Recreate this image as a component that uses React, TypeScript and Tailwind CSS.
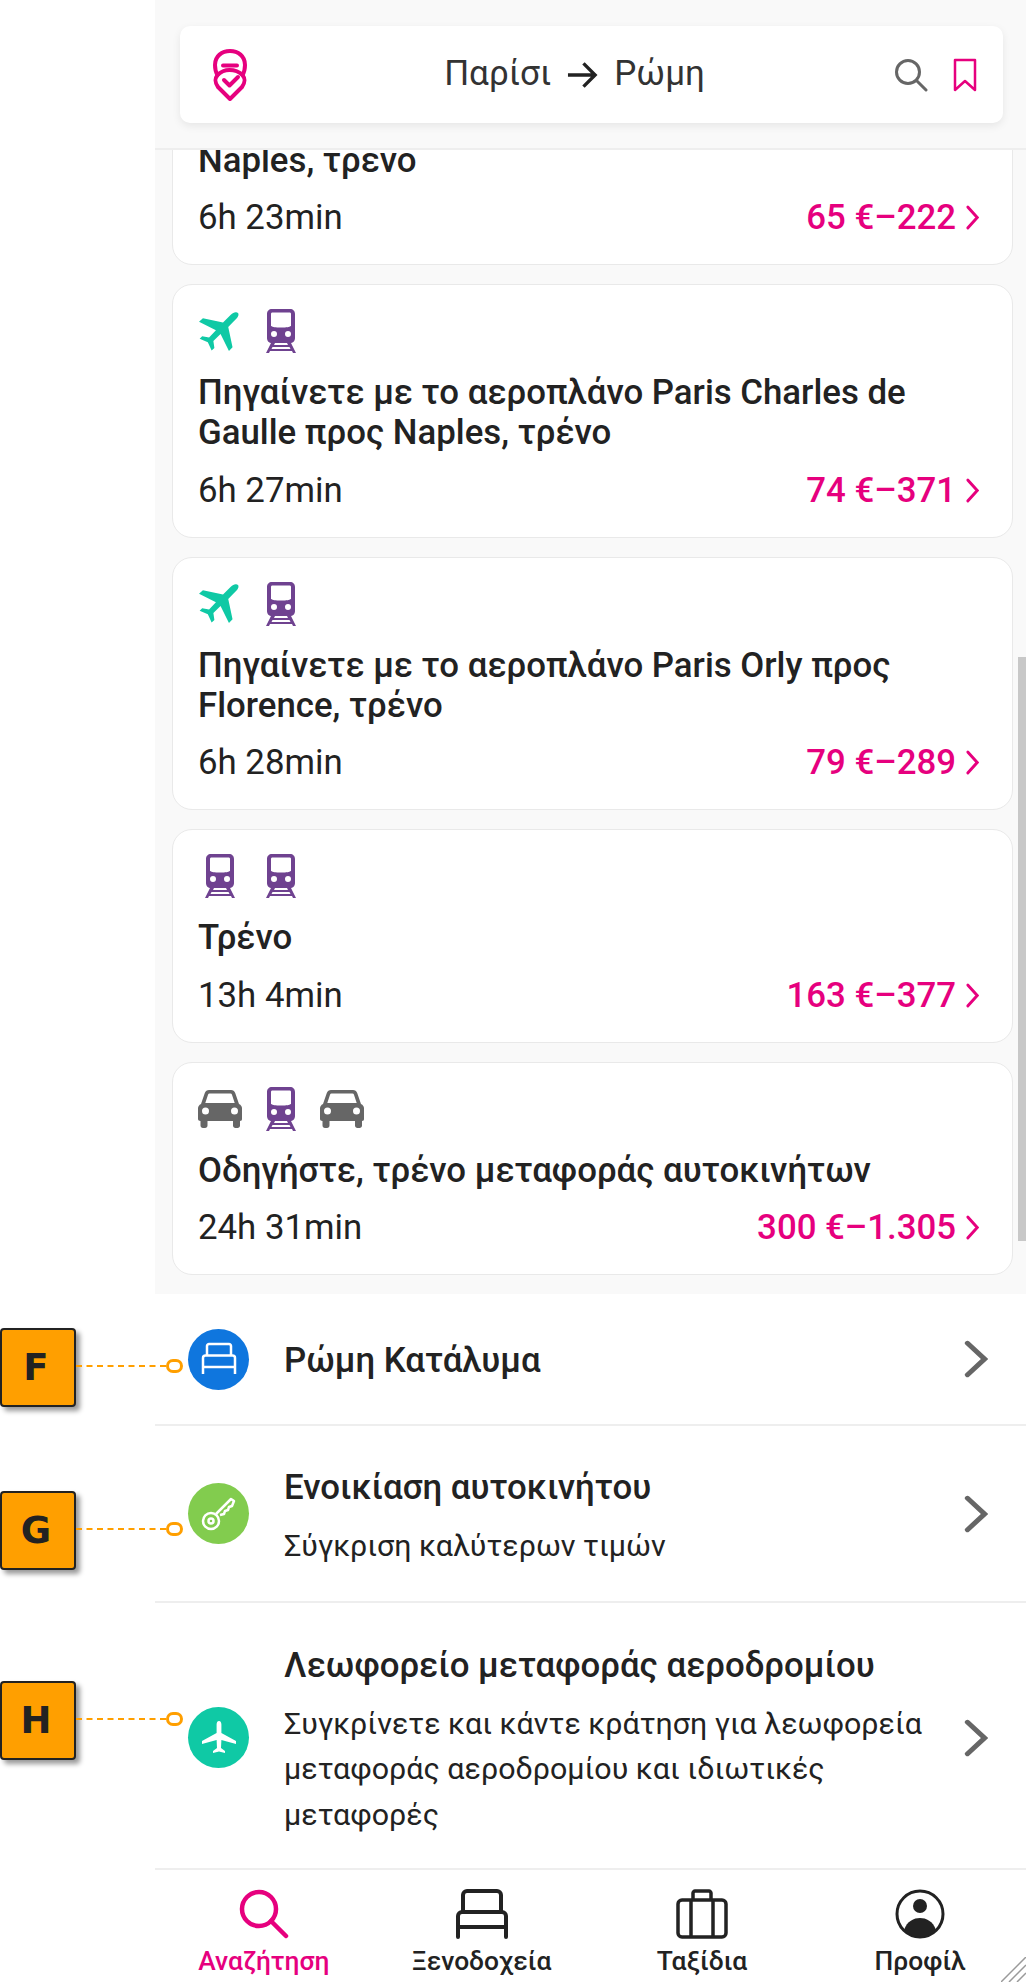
import type { ReactNode } from 'react'

const FONT = "font-['Roboto','Noto_Sans',sans-serif]"

type Mode = 'plane' | 'train' | 'car'

type Trip = {
  modes: Mode[]
  title: ReactNode
  time: string
  price: string
}

const TRIPS: Trip[] = [
  {
    modes: ['plane', 'train'],
    title: (
      <>
        Πηγαίνετε με το αεροπλάνο Paris Orly προς
        <br />
        Naples, τρένο
      </>
    ),
    time: '6h 23min',
    price: '65 €–222',
  },
  {
    modes: ['plane', 'train'],
    title: (
      <>
        Πηγαίνετε με το αεροπλάνο Paris Charles de
        <br />
        Gaulle προς Naples, τρένο
      </>
    ),
    time: '6h 27min',
    price: '74 €–371',
  },
  {
    modes: ['plane', 'train'],
    title: (
      <>
        Πηγαίνετε με το αεροπλάνο Paris Orly προς
        <br />
        Florence, τρένο
      </>
    ),
    time: '6h 28min',
    price: '79 €–289',
  },
  { modes: ['train', 'train'], title: 'Τρένο', time: '13h 4min', price: '163 €–377' },
  {
    modes: ['car', 'train', 'car'],
    title: 'Οδηγήστε, τρένο μεταφοράς αυτοκινήτων',
    time: '24h 31min',
    price: '300 €–1.305',
  },
]

function PlaneIcon() {
  return (
    <svg viewBox="0 0 40 40" className="h-[41px] w-[41px]" fill="#0fc9a5">
      <path d="M38 1.500c-1.600-.9-4 .2-6 2.200l-7.600 7.500L4.800 7 1 10.400l16.500 8.400-6.700 7-6.700-1.200L1.600 27l8 3.600 3.700 8 2.700-2.600-1-6.800 7-6.800 8.200 16.600 3.500-3.600-4.200-19.800 7.600-7.700c2-2 3-4.200 2-6z" />
    </svg>
  )
}

function TrainIcon() {
  return (
    <svg viewBox="0 0 32 44" className="h-[44px] w-[32px]" fill="#6f4290">
      <path
        fillRule="evenodd"
        d="M7 0h18c3 0 5 2 5 5v24c0 3-2 5-5 5H7c-3 0-5-2-5-5V5c0-3 2-5 5-5zm-1 5v12c2 1 4 1.500 10 1.500S24 18 26 17V5c0-1-.5-1.500-1.500-1.500h-17C6.500 3.500 6 4 6 5zm3 17a3 3 0 1 0 0 6 3 3 0 0 0 0-6zm14 0a3 3 0 1 0 0 6 3 3 0 0 0 0-6z"
      />
      <path d="M6 34h4l-1 2h14l-1-2h4l5 10h-3l-1-2H5l-1 2H1l5-10zm1.500 4-1 2h19l-1-2h-17z" />
    </svg>
  )
}

function CarIcon() {
  return (
    <svg viewBox="0 0 44 38" className="h-[38px] w-[44px]" fill="#666666">
      <path
        fillRule="evenodd"
        d="M11 0h22c2 0 3.500 1 4.200 3L41 14c2 1 3 2.500 3 4.500V29c0 1-.5 2-2 2v4.500c0 1.500-1 2.500-2.500 2.500h-2c-1.500 0-2.500-1-2.500-2.500V31H9.500v4.500C9.500 37 8.500 38 7 38H5c-1.500 0-2.500-1-2.500-2.500V31C1 31 0 30 0 29V18.500C0 16.500 1 15 3 14L6.800 3C7.500 1 9 0 11 0zm.5 3.500c-.7 0-1.200.4-1.400 1L7.300 13h29.400l-2.800-8.500c-.2-.6-.7-1-1.400-1h-21zM7.500 17.500a3.500 3.500 0 1 0 0 7 3.500 3.500 0 0 0 0-7zm29 0a3.500 3.500 0 1 0 0 7 3.500 3.500 0 0 0 0-7z"
      />
    </svg>
  )
}

function ModeIcon({ mode }: { mode: Mode }) {
  return (
    <div className={`flex h-[44px] w-[44px] items-center ${mode === 'plane' ? 'justify-start' : 'justify-center'}`}>
      {mode === 'plane' ? <PlaneIcon /> : mode === 'train' ? <TrainIcon /> : <CarIcon />}
    </div>
  )
}

function Chevron({ className }: { className: string }) {
  return (
    <svg viewBox="0 0 14 24" preserveAspectRatio="none" className={className} fill="none" stroke="currentColor" strokeWidth="3" strokeLinecap="round" strokeLinejoin="miter">
      <path d="M2 2l10 10L2 22" />
    </svg>
  )
}

function TripCard({ trip }: { trip: Trip }) {
  return (
    <div className="rounded-[20px] border border-[#e9e9e9] bg-white pt-[24px] pr-[33px] pb-[26.5px] pl-[25px]">
      <div className="flex gap-[17px]">
        {trip.modes.map((m, i) => (
          <ModeIcon key={i} mode={m} />
        ))}
      </div>
      <div className="mt-[19px] text-[34.8px] leading-[40px] font-medium whitespace-nowrap text-[#222222]">{trip.title}</div>
      <div className="mt-[18px] flex h-[40px] items-center justify-between">
        <span className="text-[34.8px] text-[#222222]">{trip.time}</span>
        <span className="flex items-center gap-[10px] text-[34.8px] font-medium text-[#e6007e]">
          {trip.price}
          <Chevron className="h-[25px] w-[13px]" />
        </span>
      </div>
    </div>
  )
}

function Callout({ letter, top, lineTop }: { letter: string; top: number; lineTop: number }) {
  return (
    <>
      <div
        className="absolute left-0 flex h-[79px] w-[76px] items-center justify-center rounded-[4px] border-2 border-[#222222] bg-[#ff9f00] pr-[4px] text-[37px] font-bold text-[#222222] shadow-[4px_4px_5px_rgba(0,0,0,0.4)] font-['DejaVu_Sans',sans-serif]"
        style={{ top }}
      >
        {letter}
      </div>
      <div className="absolute left-[76px] w-[90px] border-t-2 border-dashed border-[#ff9f00]" style={{ top: lineTop }} />
      <div className="absolute left-[166px] h-[14px] w-[17px] rounded-full border-[3px] border-[#ff9f00] bg-white" style={{ top: lineTop - 6 }} />
    </>
  )
}

function RowIcon({ className, children }: { className: string; children: ReactNode }) {
  return <div className={`flex h-[61px] w-[61px] shrink-0 items-center justify-center rounded-full text-white ${className}`}>{children}</div>
}

function Row({ icon, title, sub, className, textClass = '' }: { icon: ReactNode; title: string; sub?: ReactNode; className: string; textClass?: string }) {
  return (
    <div className={`flex items-center border-b-2 border-[#eeeeee] pr-[38px] pl-[33px] ${className}`}>
      {icon}
      <div className={`ml-[35px] flex-1 ${textClass}`}>
        <div className="text-[34.8px] leading-[40px] font-medium whitespace-nowrap text-[#222222]">{title}</div>
        {sub ? <div className="mt-[16px] text-[30.4px] leading-[45.5px] whitespace-nowrap text-[#222222]">{sub}</div> : null}
      </div>
      <Chevron className="h-[38px] w-[24px] text-[#666666]" />
    </div>
  )
}

function NavItem({ label, active, className = '', children }: { label: string; active?: boolean; className?: string; children: ReactNode }) {
  return (
    <div className={`flex flex-col items-center ${active ? 'text-[#e6007e]' : 'text-[#222222]'} ${className}`}>
      <div className="flex h-[52px] items-center justify-center">{children}</div>
      <div className="mt-[6px] text-[26.4px] leading-[30px] font-medium whitespace-nowrap">{label}</div>
    </div>
  )
}

export default function App() {
  return (
    <div className={`relative h-[1982px] w-[1026px] overflow-hidden bg-white ${FONT}`}>
      <Callout letter="F" top={1328} lineTop={1365} />
      <Callout letter="G" top={1491} lineTop={1528} />
      <Callout letter="H" top={1681} lineTop={1718} />

      <div className="ml-[155px] flex h-full flex-col">
        {/* header */}
        <div className="h-[150px] shrink-0 border-b-2 border-[#eeeeee] bg-[#f9f9f9] pt-[26px] pr-[23px] pl-[25px]">
          <div className="flex h-[97px] items-center rounded-[10px] bg-white pr-[26px] pl-[33px] shadow-[0_3px_8px_rgba(0,0,0,0.08)]">
            <svg viewBox="0 0 34 52" className="h-[52px] w-[34px]" fill="none" stroke="#e6007e" strokeWidth="4" strokeLinecap="round" strokeLinejoin="round">
              <path d="M17 50 5 38C1.500 33 1.500 30 4.500 26 2 22 2 19 2 16 2 7 9 2 17 2s15 5 15 14c0 3 0 6-2.500 10 3 4 3 7-.5 12z" />
              <path d="M10 16.500h14" />
              <path d="M4.500 26c3-3 8-5 12-5s9 1 13 5" />
              <path d="M11 31l5.500 5.500L25 28" />
            </svg>
            <div className="flex flex-1 items-center justify-center gap-[16px] pl-[8px] text-[35px] text-[#333333]">
              <span>Παρίσι</span>
              <svg viewBox="0 0 32 28" className="h-[28px] w-[31px]" fill="none" stroke="#222222" strokeWidth="3.500">
                <path d="M1 14h28M17 2l12 12-12 12" />
              </svg>
              <span>Ρώμη</span>
            </div>
            <svg viewBox="0 0 34 34" className="h-[34px] w-[34px]" fill="none" stroke="#666666" strokeWidth="3" strokeLinecap="round">
              <circle cx="14" cy="14" r="11.500" />
              <path d="M23 23l9 9" />
            </svg>
            <svg viewBox="0 0 24 34" className="ml-[25px] h-[34px] w-[24px]" fill="none" stroke="#e6007e" strokeWidth="2.500" strokeLinejoin="round">
              <path d="M2 2h20v30l-10-9-10 9z" />
            </svg>
          </div>
        </div>

        {/* results list, scrolled */}
        <div className="relative h-[1144px] shrink-0 overflow-hidden bg-[#f9f9f9]">
          <div className="-mt-[138.5px] flex flex-col gap-[19px] pr-[13px] pl-[17px]">
            {TRIPS.map((t, i) => (
              <TripCard key={i} trip={t} />
            ))}
          </div>
          <div className="absolute top-[507px] right-0 h-[584px] w-[8px] bg-[#c8c8c8]" />
        </div>

        <div className="relative">
          <Row
            className="h-[132px]"
            textClass="pt-[2px]"
            icon={
              <RowIcon className="bg-[#0f76de]">
                <svg viewBox="0 0 36 32" className="h-[36px] w-[36px]" fill="none" stroke="currentColor" strokeWidth="2.500" strokeLinejoin="round">
                  <path d="M6 13V3c0-1 1-2 2-2h20c1 0 2 1 2 2v10" />
                  <path d="M2 31V15c0-1.500 1-2.500 2.500-2.500h27c1.500 0 2.500 1 2.500 2.500v16" />
                  <path d="M2 24h32" />
                </svg>
              </RowIcon>
            }
            title="Ρώμη Κατάλυμα"
          />
          <Row
            className="h-[177px]"
            textClass="pt-[8px]"
            icon={
              <RowIcon className="bg-[#82cc4e]">
                <svg viewBox="0 0 36 36" className="h-[36px] w-[36px]" fill="none" stroke="currentColor" strokeWidth="2.500" strokeLinejoin="round">
                  <path d="M15 18 30 3l3 2-2 5-3 1-1 3-3 1-1 3-4 1" />
                  <circle cx="10" cy="25" r="8" />
                  <circle cx="10" cy="25" r="2.500" />
                </svg>
              </RowIcon>
            }
            title="Ενοικίαση αυτοκινήτου"
            sub="Σύγκριση καλύτερων τιμών"
          />
          <Row
            className="h-[267px] pt-[4px]"
            textClass="pt-[7px]"
            icon={
              <RowIcon className="bg-[#0fc9a5]">
                <svg viewBox="0 0 36 36" className="h-[36px] w-[36px]" fill="currentColor">
                  <path d="M18 1c-1.600 0-2.400 1.800-2.400 3.500v8.500L1 21v3l14.600-4 .4 8-4 3v2l6-1.500 6 1.500v-2l-4-3 .4-8L35 24v-3l-14.600-8V4.500C20.400 2.800 19.600 1 18 1z" />
                </svg>
              </RowIcon>
            }
            title="Λεωφορείο μεταφοράς αεροδρομίου"
            sub={
              <>
                Συγκρίνετε και κάντε κράτηση για λεωφορεία
                <br />
                μεταφοράς αεροδρομίου και ιδιωτικές
                <br />
                μεταφορές
              </>
            }
          />
        </div>

        {/* bottom nav */}
        <div className="grid flex-1 grid-cols-4 pt-[18px]">
          <NavItem label="Αναζήτηση" active>
            <svg viewBox="0 0 50 50" className="h-[50px] w-[50px]" fill="none" stroke="currentColor" strokeWidth="4.500" strokeLinecap="round">
              <circle cx="20" cy="20" r="17" />
              <path d="M32 32l15 15" />
            </svg>
          </NavItem>
          <NavItem label="Ξενοδοχεία">
            <svg viewBox="0 0 52 50" className="h-[50px] w-[52px]" fill="none" stroke="currentColor" strokeWidth="4" strokeLinejoin="round" strokeLinecap="round">
              <path d="M7 23V6c0-2 2-4 4-4h30c2 0 4 2 4 4v17" />
              <path d="M2 48V27c0-2 2-4 4-4h40c2 0 4 2 4 4v21" />
              <path d="M2 38h48" />
            </svg>
          </NavItem>
          <NavItem label="Ταξίδια" className="pl-[5px]">
            <svg viewBox="0 0 52 50" className="h-[50px] w-[52px]" fill="none" stroke="currentColor" strokeWidth="3.500" strokeLinejoin="round">
              <rect x="2" y="11" width="48" height="37" rx="4" />
              <path d="M17 11V4c0-1 1-2 2-2h14c1 0 2 1 2 2v7M15 11v37M37 11v37" />
            </svg>
          </NavItem>
          <NavItem label="Προφίλ" className="pl-[6px]">
            <svg viewBox="0 0 50 50" className="h-[50px] w-[50px]">
              <circle cx="25" cy="25" r="23" fill="none" stroke="currentColor" strokeWidth="3" />
              <circle cx="25" cy="17" r="7" fill="currentColor" />
              <path d="M9 41c3-9 10-12 16-12s13 3 16 12c-4 4-10 7-16 7s-12-3-16-7z" fill="currentColor" />
            </svg>
          </NavItem>
        </div>
      </div>

      {/* window resize grip */}
      <svg viewBox="0 0 25 25" className="absolute right-0 bottom-0 h-[25px] w-[25px]" stroke="#9a9a9a" strokeWidth="1.500">
        <path d="M0 25 25 0M8 25 25 8M16 25l9-9" />
      </svg>
    </div>
  )
}
